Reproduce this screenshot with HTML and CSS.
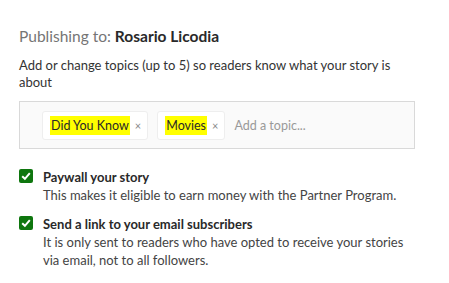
FILE: index.html
```html
<!DOCTYPE html>
<html>
<head>
<meta charset="utf-8">
<link rel="stylesheet" href="styles.css">
</head>
<body>
<div class="panel">
  <div class="publish">Publishing to: <b>Rosario Licodia</b></div>
  <p class="help">Add or change topics (up to 5) so readers know what your story is about</p>
  <div class="topics">
    <span class="tag"><span class="hl">Did You Know</span><span class="x">×</span></span>
    <span class="tag"><span class="hl">Movies</span><span class="x">×</span></span>
    <span class="placeholder">Add a topic...</span>
  </div>
  <div class="option">
    <span class="check"><svg viewBox="0 0 14 14" width="14" height="14"><path d="M3.2 7.2 L5.9 9.8 L10.8 4.2" fill="none" stroke="#fff" stroke-width="2"/></svg></span>
    <div class="opt-text">
      <div class="opt-title">Paywall your story</div>
      <div class="opt-desc">This makes it eligible to earn money with the Partner Program.</div>
    </div>
  </div>
  <div class="option">
    <span class="check"><svg viewBox="0 0 14 14" width="14" height="14"><path d="M3.2 7.2 L5.9 9.8 L10.8 4.2" fill="none" stroke="#fff" stroke-width="2"/></svg></span>
    <div class="opt-text">
      <div class="opt-title">Send a link to your email subscribers</div>
      <div class="opt-desc">It is only sent to readers who have opted to receive your stories via email, not to all followers.</div>
    </div>
  </div>
</div>
</body>
</html>
```
FILE: styles.css
```css
html, body { margin: 0; padding: 0; background: #fff; }
body { font-family: Lato, "Noto Sans", sans-serif; color: #292929; }
.panel { padding: 26px 0 0 19px; width: 396px; }
.publish { font-size: 15.5px; line-height: 20px; color: #757575; }
.publish b { color: #292929; font-weight: 700; }
.help { margin: 11px 0 0; font-size: 13px; line-height: 17px; color: #333; }
.topics { margin-top: 10px; height: 48px; border: 1px solid #d9d9d9; background: #fafafa; display: flex; align-items: center; padding-left: 22px; gap: 9px; box-sizing: border-box; }
.tag { display: inline-flex; align-items: center; height: 29px; box-sizing: border-box; background: #fff; border: 1px solid #eee; border-radius: 3px; padding: 0 6px 0 7px; font-size: 12.5px; color: #292929; }
.hl { background: #ffff00; padding: 2px 1px; }
.x { color: #888; font-size: 11px; margin-left: 5px; }
.placeholder { color: #999; font-size: 12.5px; }
.option { display: flex; gap: 10px; margin-top: 19px; }
.option + .option { margin-top: 11px; }
.check { width: 14px; height: 14px; background: #0e760e; border-radius: 2px; margin-top: 1px; flex: none; display: flex; }
.opt-title { font-size: 13px; font-weight: 700; line-height: 18px; color: #292929; }
.opt-desc { font-size: 13px; line-height: 18px; color: #444; }
```
